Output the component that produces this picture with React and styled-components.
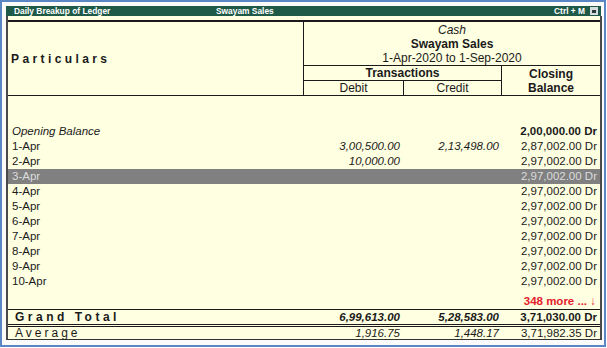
import React from 'react'
import styled, { createGlobalStyle } from 'styled-components'

const GlobalStyle = createGlobalStyle`
  body {
    margin: 0;
    background: #ffffff;
    font-family: "Liberation Sans", Arial, sans-serif;
  }
`

const Frame = styled.div`
  box-sizing: border-box;
  width: 606px;
  height: 347px;
  border: 2px solid #5a86c4;
  padding: 4px 2px 5px 4px;
  background: #fbfbfb;
  display: flex;
  flex-direction: column;
`

const TitleBar = styled.div`
  height: 10px;
  width: 595px;
  background: #1f5a49;
  color: #ffffff;
  font-size: 8.4px;
  font-weight: bold;
  line-height: 10px;
  display: flex;
  align-items: center;
  padding-left: 8px;
  box-sizing: border-box;
`

const TitleText = styled.span`
  width: ${p => p.$w || 'auto'};
  flex: ${p => p.$grow ? 1 : 'none'};
`

const CloseBox = styled.span`
  width: 8px;
  height: 8px;
  margin: 0 3px 0 5px;
  background: #d8dcdc;
  display: flex;
  align-items: center;
  justify-content: center;
  &::after {
    content: '';
    width: 4px;
    height: 3px;
    background: #2a3a3a;
  }
`

const Panel = styled.div`
  box-sizing: border-box;
  width: 596px;
  flex: 1;
  background: #ffffe1;
  border-left: 2px solid #4a4a4a;
  border-right: 2px solid #4a4a4a;
  border-bottom: 1px solid #333;
  padding-top: 4px;
  display: flex;
  flex-direction: column;
  color: #1a1a1a;
  font-size: 11.5px;
`

const Header = styled.div`
  display: grid;
  grid-template-columns: 296px 100px 98px 98px;
  grid-template-rows: 44px 15px 14px;
  border-top: 2px solid #1a1a1a;
  border-bottom: 1px solid #1a1a1a;
`

const Cell = styled.div`
  box-sizing: border-box;
  grid-column: ${p => p.$col};
  grid-row: ${p => p.$row};
  border-right: ${p => p.$br ? '1px solid #1a1a1a' : 'none'};
  border-bottom: ${p => p.$bb ? '1px solid #1a1a1a' : 'none'};
  display: flex;
  flex-direction: column;
  align-items: ${p => p.$left ? 'flex-start' : 'center'};
  justify-content: center;
  font-size: 12px;
  font-weight: ${p => p.$bold ? 'bold' : 'normal'};
  line-height: 14px;
`

const Spaced = styled.span`
  font-size: 12px;
  font-weight: ${p => p.$bold ? 'bold' : 'normal'};
  letter-spacing: ${p => p.$ls || 3.4}px;
  padding-left: 3px;
`

const HeadLine = styled.div`
  font-style: ${p => p.$italic ? 'italic' : 'normal'};
  font-weight: ${p => p.$bold ? 'bold' : 'normal'};
`

const Body = styled.div`
  flex: 1;
  display: flex;
  flex-direction: column;
  padding-top: 28px;
`

const Row = styled.div`
  display: grid;
  grid-template-columns: 296px 100px 98px 98px;
  height: ${p => p.$h || 15}px;
  line-height: ${p => p.$h || 15}px;
  background: ${p => p.$selected ? '#808080' : 'transparent'};
  color: ${p => p.$selected ? '#dcdcdc' : 'inherit'};
  border-top: ${p => p.$top ? '1px solid #1a1a1a' : 'none'};
  border-bottom: ${p => p.$double ? '3px double #1a1a1a' : 'none'};
  white-space: nowrap;
`

const Name = styled.div`
  padding-left: 4px;
  font-style: ${p => p.$italic ? 'italic' : 'normal'};
`

const Amount = styled.div`
  text-align: right;
  padding-right: ${p => p.$pr || 3}px;
  font-style: ${p => p.$italic ? 'italic' : 'normal'};
  font-weight: ${p => p.$bold ? 'bold' : 'normal'};
`

const More = styled.div`
  margin-top: auto;
  height: 15px;
  line-height: 15px;
  text-align: right;
  padding-right: 4px;
  color: #e5202a;
  font-weight: bold;
  font-size: 11.5px;
`

const rows = [
  { name: 'Opening Balance', italicName: true, dr: '', cr: '', bal: '2,00,000.00 Dr', boldBal: true },
  { name: '1-Apr', dr: '3,00,500.00', cr: '2,13,498.00', bal: '2,87,002.00 Dr' },
  { name: '2-Apr', dr: '10,000.00', cr: '', bal: '2,97,002.00 Dr' },
  { name: '3-Apr', dr: '', cr: '', bal: '2,97,002.00 Dr', selected: true },
  { name: '4-Apr', dr: '', cr: '', bal: '2,97,002.00 Dr' },
  { name: '5-Apr', dr: '', cr: '', bal: '2,97,002.00 Dr' },
  { name: '6-Apr', dr: '', cr: '', bal: '2,97,002.00 Dr' },
  { name: '7-Apr', dr: '', cr: '', bal: '2,97,002.00 Dr' },
  { name: '8-Apr', dr: '', cr: '', bal: '2,97,002.00 Dr' },
  { name: '9-Apr', dr: '', cr: '', bal: '2,97,002.00 Dr' },
  { name: '10-Apr', dr: '', cr: '', bal: '2,97,002.00 Dr' },
]

const App = () => {
  return (
    <>
      <GlobalStyle />
      <Frame>
        <TitleBar>
          <TitleText $w="202px">Daily Breakup of Ledger</TitleText>
          <TitleText $grow>Swayam Sales</TitleText>
          <TitleText>Ctrl + M</TitleText>
          <CloseBox />
        </TitleBar>
        <Panel>
          <Header>
            <Cell $col="1" $row="1 / 4" $br $left>
              <Spaced $bold>Particulars</Spaced>
            </Cell>
            <Cell $col="2 / 5" $row="1" $bb>
              <HeadLine $italic>Cash</HeadLine>
              <HeadLine $bold>Swayam Sales</HeadLine>
              <HeadLine>1-Apr-2020 to 1-Sep-2020</HeadLine>
            </Cell>
            <Cell $col="2 / 4" $row="2" $br $bb $bold>Transactions</Cell>
            <Cell $col="4" $row="2 / 4" $bold>
              <div>Closing</div>
              <div>Balance</div>
            </Cell>
            <Cell $col="2" $row="3" $br>Debit</Cell>
            <Cell $col="3" $row="3" $br>Credit</Cell>
          </Header>
          <Body>
            {rows.map(r => (
              <Row key={r.name} $selected={r.selected}>
                <Name $italic={r.italicName}>{r.name}</Name>
                <Amount $italic $pr={4}>{r.dr}</Amount>
                <Amount $italic>{r.cr}</Amount>
                <Amount $bold={r.boldBal}>{r.bal}</Amount>
              </Row>
            ))}
            <More>348 more ... ↓</More>
          </Body>
          <Row $top $double $h={14}>
            <Name><Spaced $bold $ls={3.5}>Grand Total</Spaced></Name>
            <Amount $italic $bold $pr={4}>6,99,613.00</Amount>
            <Amount $italic $bold>5,28,583.00</Amount>
            <Amount $bold>3,71,030.00 Dr</Amount>
          </Row>
          <Row $h={12}>
            <Name><Spaced $ls={3}>Average</Spaced></Name>
            <Amount $italic $pr={4}>1,916.75</Amount>
            <Amount $italic>1,448.17</Amount>
            <Amount>3,71,982.35 Dr</Amount>
          </Row>
        </Panel>
      </Frame>
    </>
  )
}

export default App
